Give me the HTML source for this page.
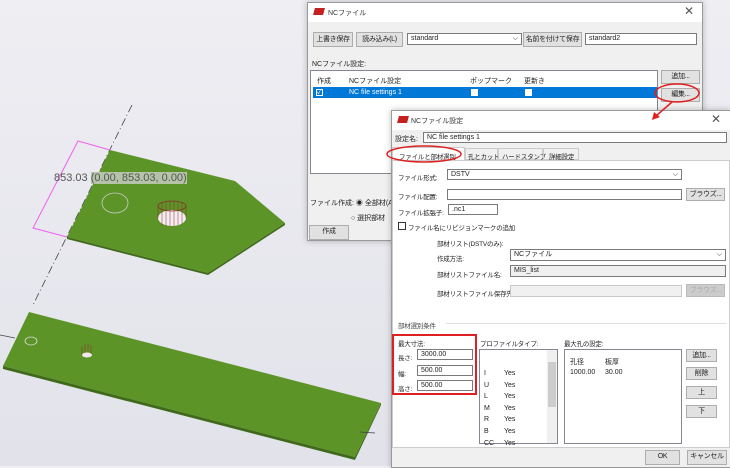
<!DOCTYPE html>
<html><head><meta charset="utf-8"><style>
*{margin:0;padding:0;box-sizing:border-box}
body{width:730px;height:466px;overflow:hidden;position:relative;background:linear-gradient(180deg,#eeeef3 0%,#e2e2ea 100%);font-family:"Liberation Sans","Noto Sans CJK JP",sans-serif;font-size:7px;color:#222}
div{white-space:nowrap}
.a{position:absolute}
.dlg{position:absolute;background:#f0f0f0;border:1px solid #9a9a9a;box-shadow:0 0 6px rgba(0,0,0,.25)}
.tb{position:absolute;left:0;right:0;top:0;height:19px;background:#fff}
.btn{position:absolute;background:#e1e1e1;border:1px solid #adadad;text-align:center;line-height:12px;font-size:7px;overflow:hidden;letter-spacing:-0.3px}
.in{position:absolute;background:#fff;border:1px solid #7a7a7a;padding-left:3px;line-height:9px;font-size:7px;overflow:hidden}
.dis{background:#f0f0f0;border-color:#c8c8c8}
.lb{position:absolute;background:#fff;border:1px solid #828790}
.cb{position:absolute;width:8px;height:8px;border:1px solid #333;background:#fff}
.s{font-size:6.5px;letter-spacing:-0.2px}
</style></head><body>
<svg class="a" style="left:0;top:0" width="390" height="466">
<line x1="132" y1="105" x2="33" y2="305" stroke="#444" stroke-width="0.8" stroke-dasharray="8,3,1,3"/>
<line x1="0" y1="335" x2="15" y2="338" stroke="#444" stroke-width="0.8"/>
<polygon points="110,150 235,181 285,223 208,273 67,237" fill="#5d9428"/>
<polygon points="67,237 208,273 285,223 285,225 208,275 67,239" fill="#3f6a1a"/>
<polygon points="29,312 381,403 355,457 3,366" fill="#5d9428"/>
<polygon points="3,366 355,457 381,403 381,405 355,460 3,369" fill="#3f6a1a"/>
<line x1="360" y1="432" x2="375" y2="433" stroke="#444" stroke-width="0.7"/>
<polyline points="110,150 78,141 33,228 67,237" fill="none" stroke="#f060f0" stroke-width="1"/>
<ellipse cx="115" cy="203" rx="13" ry="10" fill="none" stroke="#ccc" stroke-width="0.8"/>
<ellipse cx="172" cy="218" rx="14" ry="8" fill="#f4eef2"/>
<g stroke="#8a2a2a" stroke-width="0.5"><line x1="158" y1="206" x2="158" y2="218"/><line x1="162" y1="203" x2="162" y2="225"/><line x1="166" y1="202" x2="166" y2="226"/><line x1="170" y1="201" x2="170" y2="226"/><line x1="174" y1="201" x2="174" y2="226"/><line x1="178" y1="202" x2="178" y2="225"/><line x1="182" y1="203" x2="182" y2="224"/><line x1="186" y1="206" x2="186" y2="218"/></g>
<ellipse cx="172" cy="206" rx="14" ry="5" fill="none" stroke="#8a2a2a" stroke-width="0.8"/>
<ellipse cx="31" cy="341" rx="6" ry="4" fill="none" stroke="#ddd" stroke-width="0.8"/>
<g stroke="#8a2a2a" stroke-width="0.5"><line x1="82" y1="346" x2="82" y2="356"/><line x1="85" y1="344" x2="85" y2="357"/><line x1="88" y1="344" x2="88" y2="357"/><line x1="91" y1="345" x2="91" y2="356"/></g>
<ellipse cx="87" cy="355" rx="5" ry="2.5" fill="#f0e8ec"/>
</svg>
<div class="a" style="left:54px;top:172px;font-size:11px;color:#555">853.03 <span style="background:#b5c4a8">(0.00, 853.03, 0.00)</span></div>

<div class="dlg" style="left:307px;top:2px;width:396px;height:239px">
<div class="tb"><div class="a" style="left:6px;top:5px;width:10px;height:7px;background:#c42020;transform:skewX(-15deg)"></div><div class="a" style="left:20px;top:5px;color:#333">NCファイル</div><div class="a" style="right:8px;top:1px;font-size:12px;color:#555">✕</div></div>
<div class="btn" style="left:5px;top:29px;width:40px;height:15px;line-height:13px">上書き保存</div>
<div class="btn" style="left:48px;top:29px;width:47px;height:15px;line-height:13px">読み込み(L)</div>
<div class="in" style="left:99px;top:30px;width:115px;height:12px">standard<span style="float:right;margin-right:3px">⌵</span></div>
<div class="btn" style="left:215px;top:29px;width:59px;height:15px;line-height:13px">名前を付けて保存</div>
<div class="in" style="left:277px;top:30px;width:112px;height:12px">standard2</div>
<div class="a" style="left:4px;top:56px">NCファイル設定:</div>
<div class="lb" style="left:2px;top:67px;width:348px;height:104px">
<div class="a" style="left:6px;top:5px">作成</div><div class="a" style="left:38px;top:5px">NCファイル設定</div><div class="a" style="left:159px;top:5px">ポップマーク</div><div class="a" style="left:213px;top:5px">更新き</div>
<div class="a" style="left:2px;top:16px;width:344px;height:11px;background:#0078d7"></div>
<div class="a" style="left:5px;top:18px;width:7px;height:7px;border:1px solid #fff;color:#fff;font-size:7px;line-height:5px">✓</div>
<div class="a" style="left:38px;top:18px;color:#fff">NC file settings 1</div>
<div class="a" style="left:160px;top:18px;width:7px;height:7px;background:#fff"></div>
<div class="a" style="left:214px;top:18px;width:7px;height:7px;background:#fff"></div>
</div>
<div class="btn" style="left:353px;top:67px;width:39px;height:14px">追加...</div>
<div class="btn" style="left:353px;top:85px;width:39px;height:14px">編集...</div>
<div class="a" style="left:2px;top:195px">ファイル作成: ◉ 全部材(A)</div>
<div class="a" style="left:43px;top:210px">○ 選択部材</div>
<div class="btn" style="left:1px;top:222px;width:40px;height:15px">作成</div>
</div>

<div class="dlg" style="left:391px;top:110px;width:340px;height:358px">
<div class="tb"><div class="a" style="left:6px;top:5px;width:10px;height:7px;background:#c42020;transform:skewX(-15deg)"></div><div class="a" style="left:19px;top:5px;color:#333">NCファイル設定</div><div class="a" style="right:9px;top:1px;font-size:12px;color:#555">✕</div></div>
<div class="a" style="left:3px;top:23px">設定名:</div>
<div class="in" style="left:31px;top:21px;width:304px;height:11px">NC file settings 1</div>
<div class="a s" style="left:0;top:36px;width:73px;height:13px;background:#fff;border:1px solid #ccc;border-bottom:none;padding:3px 0 0 6px">ファイルと部材選別</div>
<div class="a s" style="left:73px;top:37px;width:33px;height:12px;border:1px solid #ccc;padding:2px 0 0 2px">孔とカット</div>
<div class="a s" style="left:106px;top:37px;width:45px;height:12px;border:1px solid #ccc;padding:2px 0 0 3px">ハードスタンプ</div>
<div class="a s" style="left:151px;top:37px;width:36px;height:12px;border:1px solid #ccc;padding:2px 0 0 5px">詳細設定</div>
<div class="a" style="left:0;top:49px;width:338px;height:288px;background:#fff;border:1px solid #ccc"></div>
<div class="a s" style="left:6px;top:61px">ファイル形式:</div><div class="in" style="left:55px;top:58px;width:235px;height:11px">DSTV<span style="float:right;margin-right:3px">⌵</span></div>
<div class="a s" style="left:6px;top:80px">ファイル配置:</div><div class="in" style="left:55px;top:78px;width:235px;height:11px"></div><div class="btn" style="left:294px;top:77px;width:39px;height:13px">ブラウズ...</div>
<div class="a s" style="left:6px;top:96px">ファイル拡張子:</div><div class="in" style="left:56px;top:93px;width:50px;height:11px">.nc1</div>
<div class="cb" style="left:6px;top:111px"></div><div class="a s" style="left:16px;top:111px">ファイル名にリビジョンマークの追加</div>
<div class="a s" style="left:45px;top:127px">部材リスト(DSTVのみ):</div>
<div class="a s" style="left:45px;top:142px">作成方法:</div><div class="in" style="left:118px;top:138px;width:216px;height:12px">NCファイル<span style="float:right;margin-right:3px">⌵</span></div>
<div class="a s" style="left:45px;top:158px">部材リストファイル名:</div><div class="in dis" style="left:118px;top:154px;width:216px;height:12px;border-color:#7a7a7a">MIS_list</div>
<div class="a s" style="left:45px;top:177px">部材リストファイル保存先:</div><div class="in dis" style="left:118px;top:174px;width:172px;height:12px"></div><div class="btn" style="left:294px;top:173px;width:39px;height:13px;color:#aaa;background:#ccc;border-color:#bbb">ブラウズ...</div>
<div class="a s" style="left:6px;top:209px;color:#444">部材選別条件</div><div class="a" style="left:54px;top:212px;width:280px;height:1px;background:#ddd"></div>
<div class="a" style="left:0;top:223px;width:85px;height:61px;border:2px solid #e02020"></div>
<div class="a s" style="left:6px;top:227px">最大寸法:</div>
<div class="a s" style="left:6px;top:241px">長さ:</div><div class="in" style="left:25px;top:238px;width:56px;height:11px">3000.00</div>
<div class="a s" style="left:6px;top:257px">幅:</div><div class="in" style="left:25px;top:254px;width:56px;height:11px">500.00</div>
<div class="a s" style="left:6px;top:272px">高さ:</div><div class="in" style="left:25px;top:269px;width:56px;height:11px">500.00</div>
<div class="a s" style="left:88px;top:227px">プロファイルタイプ:</div>
<div class="lb" style="left:87px;top:238px;width:79px;height:95px">
<div class="a" style="right:0;top:0;width:10px;height:93px;background:#f0f0f0"></div>
<div class="a" style="right:1px;top:12px;width:8px;height:45px;background:#cdcdcd"></div>
<div class="a" style="left:4px;top:18px;line-height:11.6px">I<br>U<br>L<br>M<br>R<br>B<br>CC</div>
<div class="a" style="left:24px;top:18px;line-height:11.6px">Yes<br>Yes<br>Yes<br>Yes<br>Yes<br>Yes<br>Yes</div>
</div>
<div class="a s" style="left:172px;top:227px">最大孔の設定:</div>
<div class="lb" style="left:172px;top:238px;width:118px;height:95px">
<div class="a" style="left:5px;top:7px">孔径</div><div class="a" style="left:40px;top:7px">板厚</div>
<div class="a" style="left:5px;top:19px">1000.00</div><div class="a" style="left:40px;top:19px">30.00</div></div>
<div class="btn" style="left:294px;top:238px;width:31px;height:13px">追加...</div>
<div class="btn" style="left:294px;top:256px;width:31px;height:13px">削除</div>
<div class="btn" style="left:294px;top:275px;width:31px;height:13px">上</div>
<div class="btn" style="left:294px;top:294px;width:31px;height:13px">下</div>
<div class="btn" style="left:253px;top:339px;width:35px;height:15px">OK</div>
<div class="btn" style="left:295px;top:339px;width:40px;height:15px">キャンセル</div>
</div>

<svg class="a" style="left:0;top:0" width="730" height="466">
<ellipse cx="677" cy="93" rx="22" ry="9" fill="none" stroke="#e02020" stroke-width="1.5"/>
<ellipse cx="424" cy="154" rx="37" ry="8" fill="none" stroke="#e02020" stroke-width="1.5"/>
<line x1="672" y1="102" x2="656" y2="116" stroke="#e02020" stroke-width="1.5"/>
<polygon points="652,120 654,112 660,117" fill="#e02020"/>
</svg>
</body></html>
